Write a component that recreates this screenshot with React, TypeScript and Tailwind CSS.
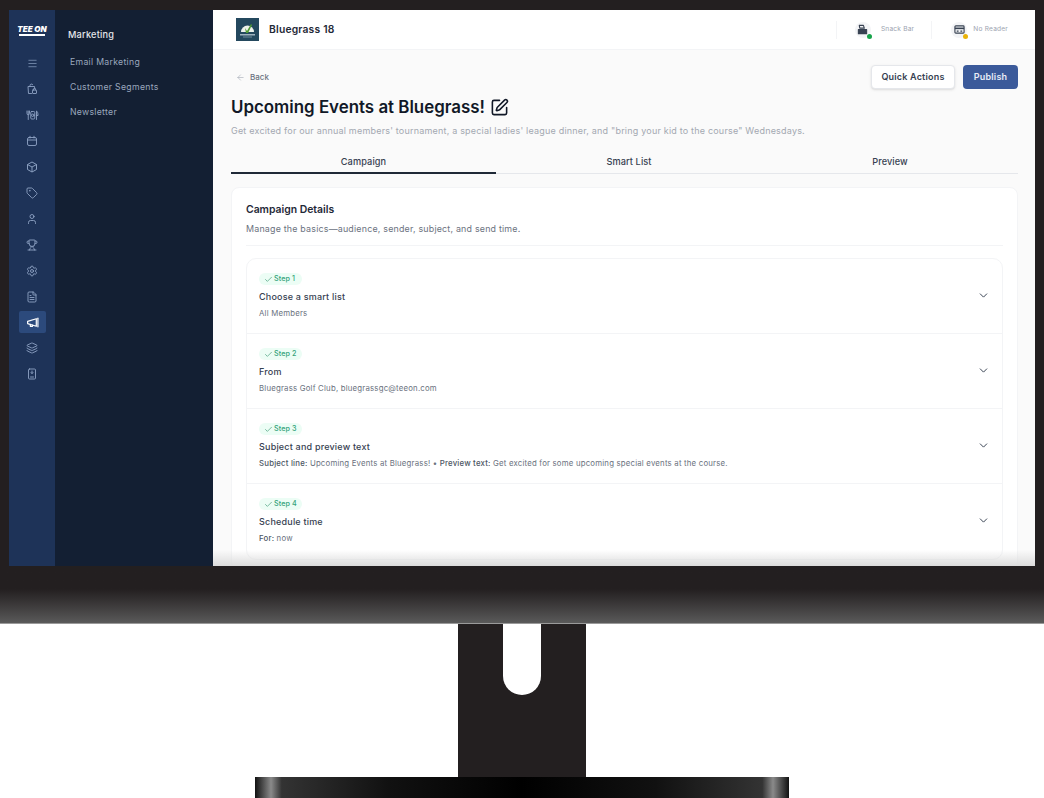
import { ArrowLeft, Check, ChevronDown, SquarePen, Menu, Tag, User, Trophy, Settings, FileText, Layers } from 'lucide-react';

function BagIcon() {
  return (
    <svg width="12" height="12" viewBox="0 0 24 24" fill="none" stroke="currentColor" strokeWidth="1.8" strokeLinejoin="round" strokeLinecap="round">
      <path d="M11 21H5L4 7h13l.4 4" />
      <path d="M8 7V5a3 3 0 0 1 5.5-1.6" />
      <rect x="13" y="14" width="8" height="7" rx="1" />
      <path d="M15 14v-1.5a2 2 0 0 1 4 0V14" />
    </svg>
  );
}

function DiningIcon() {
  return (
    <svg width="13" height="12" viewBox="0 0 26 24" fill="none" stroke="currentColor" strokeWidth="1.8" strokeLinecap="round" strokeLinejoin="round">
      <path d="M2 4v5a2.5 2.5 0 0 0 5 0V4M4.5 4v17" />
      <rect x="9.5" y="5" width="8" height="15" rx="2" />
      <circle cx="13.5" cy="12.5" r="2.5" />
      <path d="M21 21V4c2 1 3 4 3 9h-3" />
    </svg>
  );
}

function EventIcon() {
  return (
    <svg width="12" height="12" viewBox="0 0 24 24" fill="none" stroke="currentColor" strokeWidth="1.8" strokeLinecap="round">
      <rect x="3" y="5" width="18" height="16" rx="3" />
      <path d="M8 2.5V6M16 2.5V6M3 10h18" />
    </svg>
  );
}

function CubeIcon() {
  return (
    <svg width="12" height="12" viewBox="0 0 24 24" fill="none" stroke="currentColor" strokeWidth="1.9" strokeLinejoin="round">
      <path d="M12 2l9 5v10l-9 5-9-5V7z" />
      <path d="M3 7l9 5 9-5M12 12v10" />
    </svg>
  );
}

function MegaphoneIcon() {
  return (
    <svg width="13" height="13" viewBox="0 0 24 24" fill="none" stroke="currentColor" strokeWidth="2.2" strokeLinecap="round" strokeLinejoin="round">
      <path d="M3 10v4l16 5V5z" />
      <path d="M22 4v16" />
      <path d="M8 15.5V19h4v-2" />
    </svg>
  );
}

function KioskIcon() {
  return (
    <svg width="12" height="12" viewBox="0 0 24 24" fill="none" stroke="currentColor" strokeWidth="1.8" strokeLinecap="round">
      <rect x="5" y="2" width="14" height="20" rx="2" />
      <path d="M12 6v5M10 9l2 2 2-2M9 18h6" />
    </svg>
  );
}

function RegisterIcon() {
  return (
    <svg width="11" height="11" viewBox="0 0 24 24" fill="none" stroke="#374151" strokeWidth="2.4" strokeLinejoin="round">
      <path d="M5 3h9l2 6H6z" />
      <path d="M3 12h18v9H3z" fill="#374151" />
    </svg>
  );
}

function ReaderIcon() {
  return (
    <svg width="11" height="11" viewBox="0 0 24 24" fill="none" stroke="#374151" strokeWidth="2.4" strokeLinejoin="round">
      <rect x="2" y="4" width="20" height="16" rx="2" />
      <path d="M2 9.5h20" strokeWidth="3.5" />
      <path d="M6 15.5h4M14 15.5h4" />
    </svg>
  );
}

function ClubLogo() {
  return (
    <svg width="23" height="23" viewBox="0 0 23 23">
      <rect width="23" height="23" fill="#24485e" />
      <path d="M5 14a6.5 6.5 0 0 1 13 0z" fill="#eef2ec" />
      <path d="M9 10l2 3 4-7 1 1-4 8h-2z" fill="#4f9a35" />
      <rect x="4" y="16" width="15" height="1.5" fill="#9fb3bf" />
      <rect x="7" y="18.5" width="9" height="1" fill="#6f8a9a" />
    </svg>
  );
}

const rail = [
  <Menu size={11} strokeWidth={1.5} />,
  <BagIcon />,
  <DiningIcon />,
  <EventIcon />,
  <CubeIcon />,
  <Tag size={12} strokeWidth={1.8} />,
  <User size={12} strokeWidth={1.8} />,
  <Trophy size={12} strokeWidth={1.8} />,
  <Settings size={12} strokeWidth={1.8} />,
  <FileText size={12} strokeWidth={1.8} />,
  <MegaphoneIcon />,
  <Layers size={12} strokeWidth={1.8} />,
  <KioskIcon />,
];

function Step({ n, title, children }: { n: number; title: string; children: React.ReactNode }) {
  return (
    <div className="relative h-[75px] border-b border-[#f3f4f6] last:border-b-0 px-[12px] pt-[14px]">
      <div className="flex h-[12px] w-[43px] items-center gap-[1px] rounded-full bg-[#ecfdf5] pl-[5px] text-[7.2px] font-medium tracking-[0.1px] text-[#34a27a]">
        <Check size={9} strokeWidth={1.5} className="text-[#1f8a5f]" />
        Step {n}
      </div>
      <div className="mt-[5px] text-[9px] leading-[14px] font-medium tracking-[0.2px] text-[#374151]">{title}</div>
      <div className="mt-[3px] text-[7.8px] leading-[13px] tracking-[0.2px] text-[#6b7280]">{children}</div>
      <ChevronDown size={13} strokeWidth={1.8} className="absolute top-[30px] right-[12px] text-[#374151]" />
    </div>
  );
}

export default function App() {
  return (
    <div className="w-[1044px] h-[798px] overflow-hidden bg-white font-['Inter',sans-serif]">
      <div className="flex h-[566px] bg-[#231f20] pt-[10px] px-[9px]">
        <div className="relative flex flex-1 overflow-hidden">
          <div className="flex w-[46px] flex-col items-center bg-[#1e3358] pt-[15px]">
            <div className="mb-[17px] flex flex-col items-center">
              <span className="text-[8px] leading-[8px] font-black italic text-white">TEE ON</span>
              <span className="mt-[1px] h-[1.5px] w-[26px] bg-white" />
            </div>
            {rail.map((icon, i) => (
              <div key={i} className={`flex h-[22px] w-[27px] mb-[3.9px] shrink-0 items-center justify-center rounded-[2px] ${i === 10 ? 'bg-[#2c4a7c] text-white' : 'text-[#8ea3c4]'}`}>
                {icon}
              </div>
            ))}
          </div>
          <div className="w-[158px] bg-[#131f33] pl-[13px] pt-[18px]">
            <div className="text-[9.2px] leading-[13px] font-medium tracking-[0.2px] text-[#e5e7eb]">Marketing</div>
            <div className="mt-[14px] flex flex-col gap-[11px] pl-[2px] text-[8.7px] leading-[14px] tracking-[0.3px] text-[#9aa7bd]">
              <span>Email Marketing</span>
              <span>Customer Segments</span>
              <span>Newsletter</span>
            </div>
          </div>
          <div className="flex min-h-0 flex-1 flex-col bg-[#fafafa]">
            <div className="flex h-[40px] shrink-0 items-center border-b border-[#f3f4f6] bg-white pl-[23px] pr-[27px]">
              <ClubLogo />
              <span className="ml-[10px] text-[10.3px] font-semibold tracking-[0.2px] text-[#1f2937]">Bluegrass 18</span>
              <div className="ml-auto flex items-center">
                <div className="h-[18px] border-l border-[#f3f4f6]" />
                <div className="relative ml-[18px] flex h-[16px] w-[16px] items-center justify-center rounded-full bg-[#f3f4f6]">
                  <RegisterIcon />
                  <span className="absolute -right-[1px] -bottom-[1px] h-[5px] w-[5px] rounded-full bg-[#16a34a]" />
                </div>
                <span className="ml-[10px] text-[6.6px] tracking-[0.2px] text-[#9ca3af]">Snack Bar</span>
                <div className="ml-[17px] h-[18px] border-l border-[#f3f4f6]" />
                <div className="relative ml-[19px] flex h-[16px] w-[16px] items-center justify-center rounded-full bg-[#f3f4f6]">
                  <ReaderIcon />
                  <span className="absolute -right-[1px] -bottom-[1px] h-[5px] w-[5px] rounded-full bg-[#eab308]" />
                </div>
                <span className="ml-[6px] text-[6.6px] tracking-[0.2px] text-[#9ca3af]">No Reader</span>
              </div>
            </div>
            <div className="shrink-0 pl-[18px] pr-[17px] pt-[15px]">
              <div className="flex items-center justify-between">
                <div className="flex items-center gap-[5px] pl-[5px] text-[8px] font-medium text-[#6b7280]">
                  <ArrowLeft size={9} className="text-[#9ca3af]" strokeWidth={1.5} />
                  Back
                </div>
                <div className="flex gap-[8px]">
                  <div className="flex h-[24px] w-[84px] items-center justify-center rounded-[4px] border border-[#e5e7eb] bg-white text-[9px] font-semibold tracking-[0.2px] text-[#374151] shadow-sm">Quick Actions</div>
                  <div className="flex h-[24px] w-[55px] items-center justify-center rounded-[4px] bg-[#3b5a9a] text-[9px] font-semibold tracking-[0.2px] text-[#e8edf7]">Publish</div>
                </div>
              </div>
              <div className="mt-[5px] flex items-center gap-[5px]">
                <span className="text-[16.9px] leading-[26px] font-semibold text-[#111827]">Upcoming Events at Bluegrass!</span>
                <SquarePen size={19} strokeWidth={2} className="text-[#111827]" />
              </div>
              <p className="mt-[4px] text-[9px] leading-[14px] tracking-[0.2px] text-[#a3a8b1]">Get excited for our annual members' tournament, a special ladies' league dinner, and "bring your kid to the course" Wednesdays.</p>
              <div className="mt-[13px] grid grid-cols-[265px_266px_1fr] border-b border-[#e5e7eb] text-center text-[9.2px] leading-[14px] font-medium tracking-[0.1px] text-[#374151]">
                <div className="-mb-[1px] h-[23px] border-b-2 border-[#1f2937] pt-[4px]">Campaign</div>
                <div className="h-[22px] pt-[4px]">Smart List</div>
                <div className="h-[22px] pt-[4px]">Preview</div>
              </div>
              <div className="mt-[13px] rounded-[8px] border border-[#f3f4f6] bg-white px-[14px] pt-[14px] pb-[10px]">
                <div className="text-[10.4px] leading-[15px] font-semibold text-[#1f2937]">Campaign Details</div>
                <div className="mt-[5px] border-b border-[#f3f4f6] pb-[9px] text-[8.9px] leading-[14px] tracking-[0.2px] text-[#6b7280]">Manage the basics—audience, sender, subject, and send time.</div>
                <div className="mt-[12px] rounded-[10px] border border-[#f3f4f6]">
                  <Step n={1} title="Choose a smart list">All Members</Step>
                  <Step n={2} title="From">Bluegrass Golf Club, bluegrassgc@teeon.com</Step>
                  <Step n={3} title="Subject and preview text"><span className="font-medium text-[#4b5563]">Subject line:</span> Upcoming Events at Bluegrass! • <span className="font-medium text-[#4b5563]">Preview text:</span> Get excited for some upcoming special events at the course.</Step>
                  <Step n={4} title="Schedule time"><span className="font-medium text-[#4b5563]">For:</span> now</Step>
                </div>
              </div>
            </div>
          </div>
          <div className="absolute bottom-0 left-[204px] right-0 h-[16px] bg-gradient-to-b from-white/0 to-[#dcdcdc]" />
        </div>
      </div>
      <div className="h-[58px] border-b border-[#9a9a9a] bg-gradient-to-b from-[#231f20] from-40% to-[#5a5a5a]" />
      <div className="relative mx-auto h-[153px] w-[128px] bg-[#231f20]">
        <div className="absolute top-0 left-[45px] h-[71px] w-[38px] rounded-b-full bg-white" />
      </div>
      <div className="mx-auto h-[21px] w-[534px] bg-[linear-gradient(to_right,#111_0%,#8a8a8a_3%,#333_5%,#111_25%,#000_50%,#111_75%,#333_95%,#8a8a8a_97%,#111_100%)]" />
    </div>
  );
}
